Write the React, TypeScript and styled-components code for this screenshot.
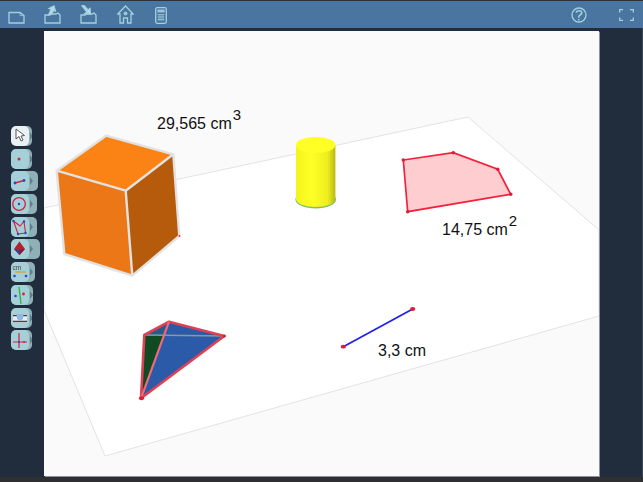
import React from "react";
import styled, { createGlobalStyle } from "styled-components";

const GlobalStyle = createGlobalStyle`
  html, body {
    margin: 0;
    padding: 0;
    background: #212d3d;
    overflow: hidden;
  }
`;

type ToolType = {
  id: string;
  width: number;
  active?: boolean;
  icon: React.ReactNode;
};

const tools: ToolType[] = [
  {
    id: "select",
    width: 21,
    active: true,
    icon: (
      <path
        d="M5 3 L5 13 L8 10.5 L10 15 L12 14 L10 10 L13.5 9.5 Z"
        fill="#fff"
        stroke="#555"
        strokeWidth="1"
      />
    ),
  },
  { id: "point", width: 21, icon: <circle cx="8" cy="10" r="1.5" fill="#d3223f" /> },
  {
    id: "line",
    width: 27,
    icon: (
      <>
        <path d="M4 12 L13 9.5" stroke="#d3223f" strokeWidth="1.5" />
        <circle cx="4" cy="12" r="1.4" fill="#2b47c4" />
        <circle cx="13" cy="9.5" r="1.4" fill="#2b47c4" />
      </>
    ),
  },
  {
    id: "circle",
    width: 26,
    icon: (
      <>
        <circle cx="8" cy="10" r="6.3" fill="none" stroke="#d3223f" strokeWidth="1.3" />
        <circle cx="8" cy="10" r="1.2" fill="#2b47c4" />
      </>
    ),
  },
  {
    id: "polygon",
    width: 26,
    icon: (
      <>
        <path
          d="M2.5 4 L9 9 L13 4.5 L14.5 16 L7 17 Z"
          fill="none"
          stroke="#d3223f"
          strokeWidth="1.1"
        />
        <circle cx="2.5" cy="4" r="1.2" fill="#2b47c4" />
        <circle cx="13" cy="4.5" r="1.2" fill="#2b47c4" />
        <circle cx="14.5" cy="16" r="1.2" fill="#2b47c4" />
        <circle cx="7" cy="17" r="1.2" fill="#2b47c4" />
      </>
    ),
  },
  {
    id: "solid",
    width: 29,
    icon: (
      <>
        <path d="M8.5 2.5 L14 10 L8.5 16 L3 10 Z" fill="#b3202f" />
        <path d="M3 10 L8 11 L8.5 16 Z" fill="#2b47a4" />
        <path d="M8 11 L14 10 L8.5 16 Z" fill="#7d1f45" />
      </>
    ),
  },
  {
    id: "measure",
    width: 24,
    icon: (
      <>
        <text x="1.5" y="7.5" fontFamily="Liberation Sans, sans-serif" fontSize="6.5" fill="#444">
          cm
        </text>
        <path d="M4 10 L15 10" stroke="#e39a2c" strokeWidth="1.2" />
        <circle cx="3.5" cy="14" r="1.3" fill="#2b47c4" />
        <circle cx="15" cy="14" r="1.3" fill="#2b47c4" />
      </>
    ),
  },
  {
    id: "parallel",
    width: 22,
    icon: (
      <>
        <path d="M8 2 L10 19" stroke="#35b04a" strokeWidth="1.4" />
        <circle cx="4.5" cy="11" r="1.3" fill="#2b47c4" />
        <circle cx="12.5" cy="9" r="1.4" fill="#d3223f" />
      </>
    ),
  },
  {
    id: "transform",
    width: 21,
    icon: (
      <>
        <path d="M2 6 L16 6 L16 15 L2 15 Z" fill="#e8eef0" />
        <path d="M2 7.5 L16 7.5 M2 13.5 L16 13.5" stroke="#444" strokeWidth="1.6" />
        <path d="M5.5 6 L12.5 6 L12 11 L9 13 L6 11 Z" fill="#8fb8e8" />
      </>
    ),
  },
  {
    id: "axes",
    width: 21,
    icon: (
      <>
        <path d="M8 3 L8 18 M2 12 L16 12" stroke="#d3223f" strokeWidth="1.2" />
        <circle cx="8" cy="12" r="1" fill="#2b47c4" />
        <circle cx="13" cy="12" r="1" fill="#d3223f" />
      </>
    ),
  },
];

const IconNew = () => (
  <BarIcon viewBox="0 0 17 13" $w={17} $h={13}>
    <path d="M1 1.5 H12 L16 4.5 V12 H1 Z" />
    <path d="M12 1.5 V4.5 H16" strokeWidth="0.7" />
  </BarIcon>
);

const IconOpen = () => (
  <BarIcon viewBox="0 0 17 19" $w={17} $h={19}>
    <path d="M1 10 H5 L7 9 H12 L14 8 L16 10 V18 H1 Z" />
    <path d="M4.5 10 L7 4.5 L5 3.5 L10 1 L11.5 6 L9.5 5.5 L7.5 9.5 Z" fill="#b6dde6" />
  </BarIcon>
);

const IconSave = () => (
  <BarIcon viewBox="0 0 17 19" $w={17} $h={19}>
    <path d="M1 10 H5 L7 9 H12 L14 8 L16 10 V18 H1 Z" />
    <path d="M2 1 L4 0.5 L8 5 L10 3.5 L10.5 9 L5 8.5 L7 7 Z" fill="#b6dde6" />
  </BarIcon>
);

const IconHome = () => (
  <BarIcon viewBox="0 0 17 19" $w={17} $h={19}>
    <path d="M0.8 9 L8.5 1 L16.2 9 L14 9 V18 H10.5 V13 H6.5 V18 H3 V9 Z" />
    <circle cx="8.5" cy="8.5" r="2" fill="#9cc4d2" stroke="none" />
  </BarIcon>
);

const IconCalc = () => (
  <BarIcon viewBox="0 0 12 17" $w={12} $h={17}>
    <rect x="0.7" y="0.7" width="10.6" height="15.6" rx="1.5" />
    <rect x="2.4" y="2.5" width="7.2" height="3" fill="#9cc4d2" stroke="none" />
    <path d="M2.5 7.5 H9.5 M2.5 10 H9.5 M2.5 12.5 H9.5 M4 7 V14 M6 7 V14 M8 7 V14" strokeWidth="0.7" />
  </BarIcon>
);

const IconHelp = () => (
  <BarIcon viewBox="0 0 16 16" $w={16} $h={16}>
    <circle cx="8" cy="8" r="7" />
    <path d="M5.3 5.8 C5.5 3 10.8 3 10.8 5.8 C10.8 7.8 7.8 7.8 7.8 9.8 V10.8" strokeWidth="1.6" />
    <path d="M7.8 12 V13.2" strokeWidth="1.6" />
  </BarIcon>
);

const IconFull = () => (
  <BarIcon viewBox="0 0 15 12" $w={15} $h={12}>
    <path d="M0.7 3.5 V0.7 H4 M11 0.7 H14.3 V3.5 M14.3 8.5 V11.3 H11 M4 11.3 H0.7 V8.5" strokeWidth="1.3" />
  </BarIcon>
);

const Scene = () => (
  <SceneSvg viewBox="44 31 555 445">
    <defs>
      <linearGradient id="cyl" x1="0" x2="1" y1="0" y2="0">
        <stop offset="0" stopColor="#f4f41c" />
        <stop offset="0.4" stopColor="#ffff26" />
        <stop offset="0.8" stopColor="#eeee20" />
        <stop offset="1" stopColor="#b8b816" />
      </linearGradient>
    </defs>

    {/* floor */}
    <polygon
      points="44,208 468,117 599,230 599,316 105,456 44,310"
      fill="#ffffff"
      stroke="#dcdcdc"
      strokeWidth="0.8"
    />

    {/* cube */}
    <polygon points="56.7,170.7 106,135.7 173.3,154.3 125.7,190.7" fill="#fb8316" />
    <polygon points="56.7,170.7 125.7,190.7 132.3,275.7 64.3,254" fill="#ec7717" />
    <polygon points="125.7,190.7 173.3,154.3 179.3,236 132.3,275.7" fill="#b65b0c" />
    <path
      d="M56.7 170.7 L106 135.7 L173.3 154.3 L179.3 236 L132.3 275.7 L64.3 254 Z M56.7 170.7 L125.7 190.7 L173.3 154.3 M125.7 190.7 L132.3 275.7"
      fill="none"
      stroke="#e2e2e2"
      strokeWidth="2.4"
      strokeLinejoin="round"
    />
    <circle cx="179.5" cy="236" r="0.9" fill="#e2304a" />

    {/* cylinder */}
    <ellipse cx="315.7" cy="199.5" rx="20.3" ry="9" fill="#7cc06a" />
    <path d="M296 145 V199 A19.7 8 0 0 0 335.4 199 V145 Z" fill="url(#cyl)" />
    <ellipse cx="315.7" cy="145" rx="19.7" ry="8" fill="#ffff26" />

    {/* polygon */}
    <polygon
      points="403.3,160 453.3,152.7 497.7,169.3 510.7,194.3 407.7,211.7"
      fill="#fdcdd0"
      stroke="#f5213a"
      strokeWidth="1.7"
    />
    <circle cx="403.3" cy="160" r="1.8" fill="#d9203a" />
    <circle cx="453.3" cy="152.7" r="1.8" fill="#d9203a" />
    <circle cx="497.7" cy="169.3" r="1.8" fill="#d9203a" />
    <circle cx="510.7" cy="194.3" r="1.8" fill="#d9203a" />
    <circle cx="407.7" cy="211.7" r="1.8" fill="#d9203a" />

    {/* segment */}
    <line x1="343.3" y1="346.7" x2="412.7" y2="309" stroke="#2222ee" strokeWidth="1.8" />
    <ellipse cx="343.3" cy="346.7" rx="2.6" ry="1.9" fill="#d9203a" />
    <ellipse cx="412.7" cy="309" rx="2.6" ry="1.9" fill="#d9203a" />

    {/* pyramid */}
    <polygon points="144.3,335 169,321.7 141,398.3" fill="#0f4a22" />
    <polygon points="169,321.7 224.3,336 144.3,335" fill="#265c8a" />
    <polygon points="169,321.7 224.3,336 141,398.3" fill="#2a5aa8" />
    <line x1="144.3" y1="335" x2="224.3" y2="336" stroke="#8a9a9a" strokeWidth="1.4" />
    <path
      d="M141 398.3 L144.3 335 L169 321.7 L224.3 336 Z"
      fill="none"
      stroke="#df4154"
      strokeWidth="2.6"
      strokeLinejoin="round"
    />
    <line x1="141" y1="398.3" x2="169" y2="321.7" stroke="#f0697a" strokeWidth="2.2" />
    <ellipse cx="141.5" cy="398.3" rx="2.6" ry="2" fill="#d9203a" />
    <circle cx="224.3" cy="336" r="1.6" fill="#d9203a" />
  </SceneSvg>
);

export default function App() {
  return (
    <>
      <GlobalStyle />
      <Page>
        <TopBar>
          <BarGroup>
            <BarSlot $w={32}><IconNew /></BarSlot>
            <BarSlot $w={40}><IconOpen /></BarSlot>
            <BarSlot $w={33}><IconSave /></BarSlot>
            <BarSlot $w={40}><IconHome /></BarSlot>
            <BarSlot $w={32}><IconCalc /></BarSlot>
          </BarGroup>
          <HelpGroup>
            <BarSlot $w={32}><IconHelp /></BarSlot>
            <BarSlot $w={32}><IconFull /></BarSlot>
          </HelpGroup>
        </TopBar>

        <Main>
          <ToolColumn>
            {tools.map((tool) => (
              <ToolButton key={tool.id} $width={tool.width}>
                <ToolFace $active={tool.active}>
                  <svg width="18" height="20" viewBox="0 0 18 20">
                    {tool.icon}
                  </svg>
                </ToolFace>
                <ToolArrow />
              </ToolButton>
            ))}
          </ToolColumn>

          <Canvas>
            <Scene />
            <Measure $x={113} $y={83}>
              29,565 cm<Power>3</Power>
            </Measure>
            <Measure $x={398} $y={189}>
              14,75 cm<Power>2</Power>
            </Measure>
            <Measure $x={334} $y={310}>3,3 cm</Measure>
          </Canvas>
        </Main>

        <BottomStrip />
      </Page>
    </>
  );
}

const Page = styled.div`
  width: 643px;
  height: 482px;
  display: flex;
  flex-direction: column;
  background: #212d3d;
  font-family: "Liberation Sans", Arial, sans-serif;
  overflow: hidden;
`;

const TopBar = styled.div`
  height: 27px;
  flex: none;
  border-top: 1px solid #2e3238;
  padding: 0 1px 0 0;
  display: flex;
  justify-content: space-between;
  background: #4a75a0;
`;

const BarGroup = styled.div`
  display: flex;
  align-items: flex-end;
  padding-bottom: 4px;
`;

const HelpGroup = styled.div`
  display: flex;
  align-items: center;
  gap: 15.5px;
`;

const BarSlot = styled.div<{ $w: number }>`
  width: ${(p) => p.$w}px;
  display: flex;
  align-items: center;
  justify-content: center;
`;

const BarIcon = styled.svg<{ $w: number; $h: number }>`
  width: ${(p) => p.$w}px;
  height: ${(p) => p.$h}px;
  fill: none;
  stroke: #a4d0de;
  stroke-width: 1.3;
`;

const Main = styled.div`
  flex: 1;
  display: flex;
  padding-top: 3px;
  min-height: 0;
  border-right: 1px solid #3a4656;
`;

const ToolColumn = styled.div`
  width: 44px;
  flex: none;
  box-sizing: border-box;
  padding: 95px 0 0 11px;
  display: flex;
  flex-direction: column;
  align-items: flex-start;
  gap: 2.7px;
`;

const ToolButton = styled.div<{ $width: number }>`
  width: ${(p) => p.$width}px;
  height: 20px;
  display: flex;
  border-radius: 5px;
  overflow: hidden;
  background: #8fb0b6;
`;

const ToolFace = styled.div<{ $active?: boolean }>`
  width: 18px;
  flex: none;
  border-radius: 5px;
  background: ${(p) => (p.$active ? "#e9f1f2" : "#a6d0d7")};

  svg {
    filter: blur(0.3px);
  }
`;

const ToolArrow = styled.div`
  width: 0;
  height: 0;
  margin: 6px 0 0 1px;
  border-left: 3px solid #62808a;
  border-top: 4px solid transparent;
  border-bottom: 4px solid transparent;
`;

const Canvas = styled.div`
  position: relative;
  width: 555px;
  height: 445px;
  flex: none;
  background: #fafafa;
  box-shadow: 1px 1px 0 #8a93a0;
`;

const SceneSvg = styled.svg`
  display: block;
  width: 555px;
  height: 445px;
`;

const Measure = styled.div<{ $x: number; $y: number }>`
  position: absolute;
  left: ${(p) => p.$x}px;
  top: ${(p) => p.$y}px;
  font-size: 16px;
  line-height: 20px;
  color: #111;
  white-space: nowrap;
`;

const Power = styled.span`
  position: relative;
  top: -9px;
  margin-left: 1px;
  font-size: 15px;
`;

const BottomStrip = styled.div`
  height: 5px;
  flex: none;
  background: #2f2f31;
`;
